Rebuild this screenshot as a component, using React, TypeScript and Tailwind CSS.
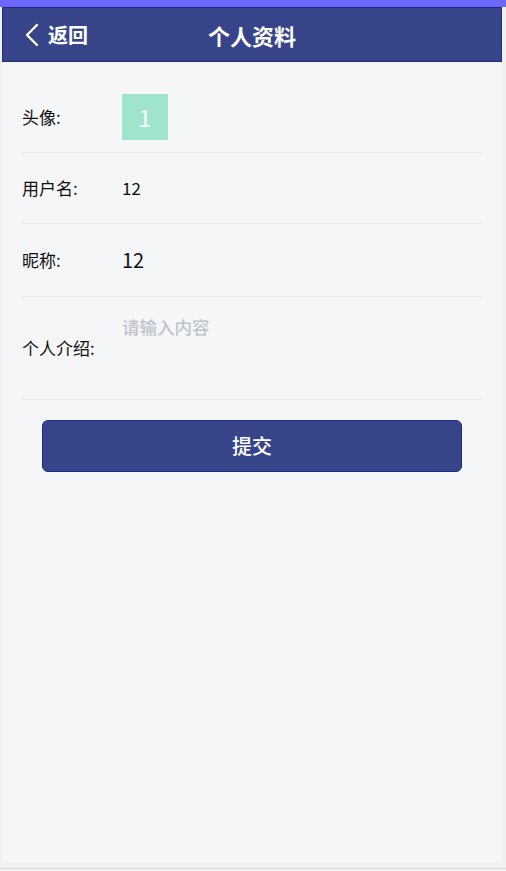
import React from "react";

const font = { fontFamily: '"Noto Sans CJK SC", "Noto Sans", sans-serif' };

const Row: React.FC<{ label: string; className?: string; children: React.ReactNode }> = ({
  label,
  className,
  children,
}) => (
  <div className={`flex items-center border-b border-[#ebedf0] ${className ?? ""}`}>
    <div className="w-[100px] shrink-0 text-[17px] text-[#111]">{label}</div>
    <div className="flex-1 min-w-0">{children}</div>
  </div>
);

export default function App() {
  return (
    <div className="w-[506px] h-[871px] bg-[#eef0f2] overflow-hidden" style={font}>
      {/* top accent */}
      <div className="h-[7px] bg-[#6c66fb]" />

      <div className="ml-[2px] w-[500px] h-[856px] bg-[#f5f6f8] flex flex-col">
        {/* Header */}
        <div className="relative h-[55px] bg-[#37448a] border border-[#1b2b86] flex items-center text-white">
          <div className="flex items-center pl-[20px] gap-[7px]">
            <svg width="18" height="24" viewBox="0 0 18 24" fill="none">
              <path d="M14 2 L4 12 L14 22" stroke="white" strokeWidth="2.4" strokeLinecap="round" strokeLinejoin="round" />
            </svg>
            <span className="text-[20px] font-bold leading-none">返回</span>
          </div>
          <div className="absolute left-0 right-0 text-center text-[22px] font-bold leading-none pointer-events-none">
            个人资料
          </div>
        </div>

        {/* Form */}
        <div className="px-[20px] pt-[20px]">
          <Row label="头像:" className="h-[71px]">
            <div className="w-[46px] h-[46px] bg-[#9fe5cc] flex items-center justify-center text-white text-[23px]">
              1
            </div>
          </Row>
          <Row label="用户名:" className="h-[71px]">
            <span className="text-[17px] text-[#111]">12</span>
          </Row>
          <Row label="昵称:" className="h-[73px]">
            <span className="text-[20px] text-[#111]">12</span>
          </Row>
          <Row label="个人介绍:" className="h-[103px]">
            <div className="h-[103px] pt-[17px] text-[17.5px] font-medium text-[#c0c4cc]">请输入内容</div>
          </Row>
        </div>

        <div className="px-[40px] pt-[20px]">
          <button className="w-full h-[52px] bg-[#37448a] border border-[#1b2b86] rounded-[6px] text-white text-[20px] font-medium">
            提交
          </button>
        </div>
      </div>
      <div className="h-[5px]" />
      <div className="h-px bg-[#dcdee1]" />
    </div>
  );
}
